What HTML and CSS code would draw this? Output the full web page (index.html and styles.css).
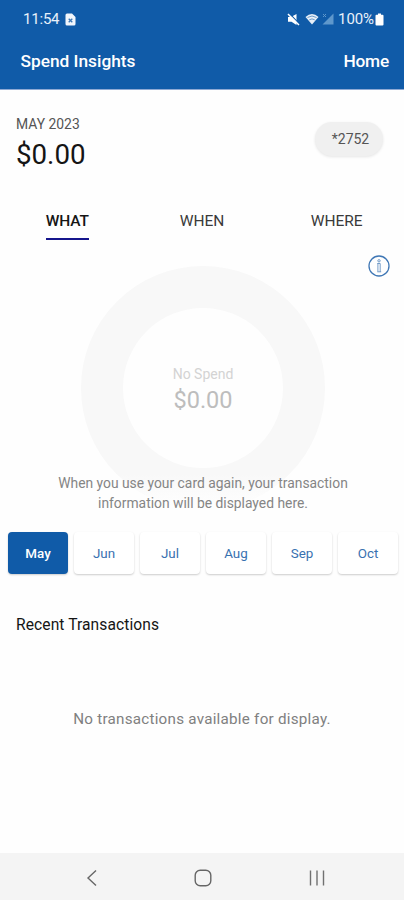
FILE: index.html
```html
<!DOCTYPE html>
<html lang="en">
<head>
<meta charset="utf-8">
<title>Spend Insights</title>
<link rel="stylesheet" href="styles.css">
</head>
<body>
<div class="screen">
  <header class="header">
    <div class="status">
      <span class="clock">11:54</span>
      <svg class="sim" width="11" height="13" viewBox="0 0 11 13"><path d="M2 0.500h5L10.500 4v7a1.500 1.500 0 0 1-1.500 1.500H2A1.500 1.500 0 0 1 .5 11V2A1.500 1.500 0 0 1 2 .5z" fill="#f1f6fc"/><path d="M3.700 5.700l3.600 3.600m0-3.600L3.700 9.300" stroke="#3c77b5" stroke-width="1.300"/></svg>
      <span class="spacer"></span>
      <svg class="mute" width="13" height="13" viewBox="0 0 13 13"><path d="M1 4h3l5.500-3v11L4.500 8.800H1z" fill="#fff"/><path d="M2 0l11 11.500" stroke="#105ba8" stroke-width="1.200"/><path d="M1 1l11 11" stroke="#fff" stroke-width="1.500"/></svg>
      <svg class="wifi" width="14" height="12" viewBox="0 0 14 12"><path d="M.5 4Q7-2 13.500 4L7 11.500z" fill="#e7eff8"/><path d="M2.500 4.500Q7 1.500 11.500 4.500M4.300 6.800Q7 5 9.700 6.800" fill="none" stroke="#4d86bf" stroke-width=".8"/></svg>
      <svg class="signal" width="12" height="12" viewBox="0 0 12 12"><path d="M11.500.5v11H.5z" fill="#5f98cc"/><path d="M1 1l3 3m0-3L1 4" stroke="#5f98cc"/></svg>
      <span class="percent">100%</span>
      <svg class="battery" width="9" height="13" viewBox="0 0 9 13"><path d="M3 .5h3v1.300h1.500q1 0 1 1v8.700q0 1-1 1h-6q-1 0-1-1V2.800q0-1 1-1H3z" fill="#fff"/></svg>
    </div>
    <div class="titlebar"><span class="title">Spend Insights</span><span class="home">Home</span></div>
  </header>
  <section class="summary">
    <div><div class="period">MAY 2023</div><div class="total">$0.00</div></div>
    <div class="account">*2752</div>
  </section>
  <nav class="tabs">
    <div class="tab active"><span>WHAT</span></div>
    <div class="tab"><span>WHEN</span></div>
    <div class="tab"><span>WHERE</span></div>
  </nav>
  <section class="chart">
    <svg class="info" width="22" height="22" viewBox="0 0 22 22" fill="none" stroke="#3f77b5"><circle cx="11" cy="11" r="10" stroke-width="1.300"/><path d="M9.300 8.500h2.900v8.200M9.300 16.800h3.900M9.900 16.500V8.500" stroke-width=".7"/><circle cx="11" cy="5.800" r="1.200" stroke-width=".7"/></svg>
    <div class="ring"><span class="ring-label">No Spend</span><span class="ring-value">$0.00</span></div>
    <p class="message">When you use your card again, your transaction<br>information will be displayed here.</p>
  </section>
  <div class="months">
    <div class="month selected">May</div><div class="month">Jun</div><div class="month">Jul</div><div class="month">Aug</div><div class="month">Sep</div><div class="month">Oct</div>
  </div>
  <h2 class="recent">Recent Transactions</h2>
  <p class="empty">No transactions available for display.</p>
  <footer class="navbar">
    <svg width="12" height="18" viewBox="0 0 12 18"><path d="M10 1.500L2 9l8 7.500" fill="none" stroke="#666" stroke-width="1.400"/></svg>
    <svg width="18" height="18" viewBox="0 0 18 18"><rect x="1.200" y="1.200" width="15.600" height="15.600" rx="5" fill="none" stroke="#666" stroke-width="1.400"/></svg>
    <svg width="18" height="18" viewBox="0 0 18 18"><path d="M2.500 1.500v15M9 1.500v15M15.500 1.500v15" stroke="#707070" stroke-width="1.400"/></svg>
  </footer>
</div>
</body>
</html>
```
FILE: styles.css
```css
* { box-sizing: border-box; }
body { margin: 0; font-family: Roboto, sans-serif; background: #fefefe; color: #111; }
.screen { width: 404px; height: 900px; display: flex; flex-direction: column; overflow: hidden; }
.header { height: 90px; background: #105ba8; color: #fff; border-bottom: 1px solid #8ea9d4; flex: none; }
.status { display: flex; align-items: center; height: 38px; padding: 0 20px 0 23px; font-size: 15px; color: #e9f1fa; }
.clock { width: 42px; letter-spacing: -.2px; }
.spacer { flex: 1; }
.mute { margin-right: 5px; }
.wifi { margin-right: 3px; }
.signal { margin-right: 4px; }
.percent { font-size: 15px; letter-spacing: -.1px; margin-right: 1px; }
.titlebar { display: flex; justify-content: space-between; padding: 0 15px 0 20.500px; height: 46px; align-items: center; font-size: 17.300px; font-weight: 500; }
.home { letter-spacing: -.2px; }
.summary { display: flex; justify-content: space-between; height: 106px; padding: 25px 21px 0 16px; flex: none; }
.period { font-size: 13.900px; line-height: 18px; color: #555; }
.total { font-size: 27.700px; line-height: 43px; color: #151515; }
.account { width: 68px; height: 34px; margin-top: 7px; border-radius: 17px; background: #f0f0f0; box-shadow: 0 1px 3px #0000001a; font-size: 14px; line-height: 34px; text-align: center; color: #555; padding-left: 3px; }
.tabs { display: grid; grid-template-columns: repeat(3, 1fr); height: 49px; text-align: center; font-size: 15.500px; color: #3a3a3a; flex: none; }
.tab span { display: inline-block; height: 44px; line-height: 50px; }
.active span { color: #151515; border-bottom: 2px solid #15158c; font-weight: 500; letter-spacing: -.1px; }
.chart { position: relative; height: 286px; padding-top: 21px; flex: none; }
.info { position: absolute; left: 368px; top: 10px; }
.ring { width: 244px; height: 244px; margin: 0 79px 0 81px; border: 42px solid #f8f8f8; border-radius: 50%; display: flex; flex-direction: column; align-items: center; justify-content: center; padding-top: 3px; }
.ring-label { font-size: 14px; line-height: 20px; color: #d3d3d3; }
.ring-value { font-size: 23.500px; line-height: 32px; color: #bdbdbd; }
.message { position: absolute; left: 0; right: 0; top: 228px; margin: 0; padding-left: 2px; text-align: center; font-size: 13.850px; line-height: 20px; color: #858585; background: linear-gradient(#fefefe00, #fefefe 34px); }
.months { display: grid; grid-template-columns: repeat(6, 60px); column-gap: 6px; padding-left: 8px; height: 43px; margin-top: 1px; flex: none; }
.month { height: 42px; border-radius: 4px; background: #fff; box-shadow: 0 1px 2px #0003; color: #3971b0; font-size: 13.400px; line-height: 43px; text-align: center; }
.selected { background: #105ba8; color: #fff; font-weight: 500; }
.recent { margin: 40px 0 0 16px; font-size: 15.600px; line-height: 20px; font-weight: 400; letter-spacing: .08px; color: #151515; }
.empty { margin: 74px 0 0; text-align: center; font-size: 15.200px; letter-spacing: .25px; line-height: 20px; color: #808080; }
.navbar { margin-top: auto; height: 47px; background: #f4f4f4; display: flex; align-items: center; justify-content: space-between; padding: 3px 78px 0 86px; }
```
